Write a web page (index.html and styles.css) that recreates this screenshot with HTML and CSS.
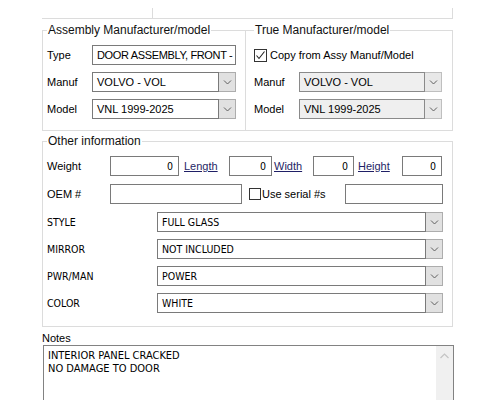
FILE: index.html
```html
<!DOCTYPE html>
<html>
<head>
<meta charset="utf-8" />
<title>Part details</title>
<link rel="stylesheet" href="styles.css">
</head>

<body>
<!-- bas du groupe précédent, coupé par la fenêtre -->
<div class="top_strip">
    <div class="top_cell"></div>
</div>

<div class="group_row">
    <fieldset class="group group_assy">
        <legend>Assembly Manufacturer/model</legend>
        <div class="form_row">
            <span class="lbl lbl_short">Type</span>
            <div class="field field_assy">DOOR ASSEMBLY, FRONT -</div>
        </div>
        <div class="form_row">
            <span class="lbl lbl_short">Manuf</span>
            <div class="combo combo_assy">
                <div class="combo_text">VOLVO - VOL</div>
                <div class="combo_btn"><svg width="15" height="18" viewBox="0 0 15 18"><polyline points="4,7.5 7.5,11 11,7.5" fill="none" stroke="#606060" stroke-width="1"/></svg></div>
            </div>
        </div>
        <div class="form_row">
            <span class="lbl lbl_short">Model</span>
            <div class="combo combo_assy">
                <div class="combo_text">VNL 1999-2025</div>
                <div class="combo_btn"><svg width="15" height="18" viewBox="0 0 15 18"><polyline points="4,7.5 7.5,11 11,7.5" fill="none" stroke="#606060" stroke-width="1"/></svg></div>
            </div>
        </div>
    </fieldset>

    <fieldset class="group group_true">
        <legend>True Manufacturer/model</legend>
        <div class="form_row">
            <span class="check checked"><svg width="11" height="11" viewBox="0 0 11 11"><polyline points="1.5,5.5 4,8.5 9.5,1.5" fill="none" stroke="#222" stroke-width="1.1"/></svg></span>
            <span class="lbl">Copy from Assy Manuf/Model</span>
        </div>
        <div class="form_row">
            <span class="lbl lbl_short">Manuf</span>
            <div class="combo combo_true disabled">
                <div class="combo_text">VOLVO - VOL</div>
                <div class="combo_btn"><svg width="15" height="18" viewBox="0 0 15 18"><polyline points="4,7.5 7.5,11 11,7.5" fill="none" stroke="#606060" stroke-width="1"/></svg></div>
            </div>
        </div>
        <div class="form_row">
            <span class="lbl lbl_short">Model</span>
            <div class="combo combo_true disabled">
                <div class="combo_text">VNL 1999-2025</div>
                <div class="combo_btn"><svg width="15" height="18" viewBox="0 0 15 18"><polyline points="4,7.5 7.5,11 11,7.5" fill="none" stroke="#606060" stroke-width="1"/></svg></div>
            </div>
        </div>
    </fieldset>
</div>

<fieldset class="group group_other">
    <legend>Other information</legend>
    <div class="form_row">
        <span class="lbl lbl_wide">Weight</span>
        <div class="field num w_weight">0</div>
        <span class="link l_length">Length</span>
        <div class="field num w_length">0</div>
        <span class="link l_width">Width</span>
        <div class="field num w_width">0</div>
        <span class="link l_height">Height</span>
        <div class="field num w_height">0</div>
    </div>
    <div class="form_row">
        <span class="lbl lbl_wide">OEM #</span>
        <div class="field w_oem"></div>
        <span class="check check_serial"></span>
        <span class="lbl">Use serial #s</span>
        <div class="field w_serial"></div>
    </div>
    <div class="attr_list">
        <div class="form_row">
            <span class="lbl lbl_attr">STYLE</span>
            <div class="combo combo_attr">
                <div class="combo_text">FULL GLASS</div>
                <div class="combo_btn"><svg width="15" height="18" viewBox="0 0 15 18"><polyline points="4,7.5 7.5,11 11,7.5" fill="none" stroke="#606060" stroke-width="1"/></svg></div>
            </div>
        </div>
        <div class="form_row">
            <span class="lbl lbl_attr">MIRROR</span>
            <div class="combo combo_attr">
                <div class="combo_text">NOT INCLUDED</div>
                <div class="combo_btn"><svg width="15" height="18" viewBox="0 0 15 18"><polyline points="4,7.5 7.5,11 11,7.5" fill="none" stroke="#606060" stroke-width="1"/></svg></div>
            </div>
        </div>
        <div class="form_row">
            <span class="lbl lbl_attr">PWR/MAN</span>
            <div class="combo combo_attr">
                <div class="combo_text">POWER</div>
                <div class="combo_btn"><svg width="15" height="18" viewBox="0 0 15 18"><polyline points="4,7.5 7.5,11 11,7.5" fill="none" stroke="#606060" stroke-width="1"/></svg></div>
            </div>
        </div>
        <div class="form_row">
            <span class="lbl lbl_attr">COLOR</span>
            <div class="combo combo_attr">
                <div class="combo_text">WHITE</div>
                <div class="combo_btn"><svg width="15" height="18" viewBox="0 0 15 18"><polyline points="4,7.5 7.5,11 11,7.5" fill="none" stroke="#606060" stroke-width="1"/></svg></div>
            </div>
        </div>
    </div>
</fieldset>

<div class="notes_label">Notes</div>
<div class="notes">
    <div class="notes_text">INTERIOR PANEL CRACKED<br>NO DAMAGE TO DOOR</div>
    <div class="scrollbar"><svg width="17" height="20" viewBox="0 0 17 20"><polyline points="4.5,12 8.5,8 12.5,12" fill="none" stroke="#c4c4c4" stroke-width="1.2"/></svg></div>
</div>
</body>

</html>
```

FILE: styles.css
```css
body {
    margin: 0;
    padding: 0;
    background: white;
    color: black;
    font-family: "Liberation Sans", Arial, sans-serif;
    font-size: 11px;
    overflow: hidden;
}

/* bas du groupe du dessus */
.top_strip {
    box-sizing: border-box;
    margin: 8px 0 0 42px;
    width: 411px;
    height: 11px;
    border-right: 1px solid #dcdcdc;
    border-bottom: 1px solid #dcdcdc;
}

.top_cell {
    box-sizing: border-box;
    width: 111px;
    height: 100%;
    border-right: 1px solid #dcdcdc;
}

/* groupes */
.group {
    box-sizing: border-box;
    margin: 0;
    min-width: 0;
    border: 1px solid #dcdcdc;
    padding: 8px 9px 11px 4px;
}

.group legend {
    font-size: 12px;
    line-height: 14px;
    padding: 0 1px;
    color: #111;
}

.group_row {
    display: flex;
    margin: 4px 0 0 42px;
    width: 411px;
}

.group_assy {
    width: 204px;
}

.group_true {
    width: 207px;
    border-left: none;
    padding-left: 8px;
}

.group_other {
    margin: 3px 0 0 42px;
    width: 411px;
    padding-bottom: 13px;
}

.form_row {
    display: flex;
    align-items: center;
    height: 20px;
}

.group_assy .form_row + .form_row,
.group_true .form_row + .form_row {
    margin-top: 7px;
}

.group_other .form_row + .form_row,
.attr_list {
    margin-top: 8px;
}

.attr_list .form_row + .form_row {
    margin-top: 7px;
}

.lbl {
    font-size: 11px;
    white-space: nowrap;
}

.lbl_short { width: 45px; flex: none; }
.lbl_wide {  width: 63px; flex: none; }
.lbl_attr {  width: 110px; flex: none; }

/* textes en police "Tahoma" de la partie basse */
.lbl_attr,
.combo_attr .combo_text,
.field.num,
.notes_text {
    font-family: "DejaVu Sans Condensed", "Liberation Sans", sans-serif;
    font-size: 10.5px;
}

/* champs */
.field {
    box-sizing: border-box;
    flex: none;
    height: 20px;
    border: 1px solid #7a7a7a;
    background: white;
    padding: 0 4px;
    line-height: 18px;
    white-space: nowrap;
    overflow: hidden;
}

.field.num {
    text-align: right;
    padding-right: 5px;
}

.field_assy {
    width: 144px;
    letter-spacing: -0.35px;
}

.w_weight { width: 69px; }
.w_length { width: 43px; }
.w_width {  width: 41px; }
.w_height { width: 40px; }
.w_oem {    width: 132px; }
.w_serial { width: 98px; margin-left: auto; }

.link {
    flex: none;
    font-size: 11px;
    color: #1f1f66;
    text-decoration: underline;
}

.l_length { width: 45px; margin-left: 5px; }
.l_width {  width: 39px; margin-left: 2px; }
.l_height { width: 44px; margin-left: 4px; }

/* cases à cocher */
.check {
    box-sizing: border-box;
    flex: none;
    display: flex;
    align-items: center;
    justify-content: center;
    width: 13px;
    height: 13px;
    border: 1px solid #333333;
    background: white;
    margin-right: 3px;
}

.check_serial {
    width: 12px;
    height: 12px;
    margin-left: 7px;
    margin-right: 1px;
}

/* listes déroulantes */
.combo {
    box-sizing: border-box;
    flex: none;
    display: flex;
    height: 20px;
}

.combo_assy { width: 144px; }
.combo_true { width: 143px; }
.combo_attr { width: 286px; }

.combo_text {
    box-sizing: border-box;
    flex: 1;
    border: 1px solid #7a7a7a;
    background: white;
    padding: 0 4px;
    line-height: 18px;
    white-space: nowrap;
    overflow: hidden;
}

.combo_btn {
    box-sizing: border-box;
    flex: none;
    width: 17px;
    height: 20px;
    border: 1px solid #adadad;
    border-left: none;
    background: #e1e1e1;
    display: flex;
    align-items: center;
    justify-content: center;
}

.combo.disabled .combo_text {
    background: #efefef;
    border-color: #8a8a8a;
}

.combo.disabled .combo_btn {
    background: #e8e8e8;
    border-color: #bfbfbf;
}

/* notes */
.notes_label {
    margin: 5px 0 0 42px;
    font-size: 11px;
    line-height: 13px;
}

.notes {
    box-sizing: border-box;
    display: flex;
    margin-left: 43px;
    width: 411px;
    height: 70px;
    border: 1px solid #828282;
}

.notes .notes_text {
    flex: 1;
    padding: 3px 4px;
    line-height: 13px;
    font-size: 11px;
}

.scrollbar {
    width: 17px;
    background: #f0f0f0;
}

.scrollbar svg {
    display: block;
}
```
